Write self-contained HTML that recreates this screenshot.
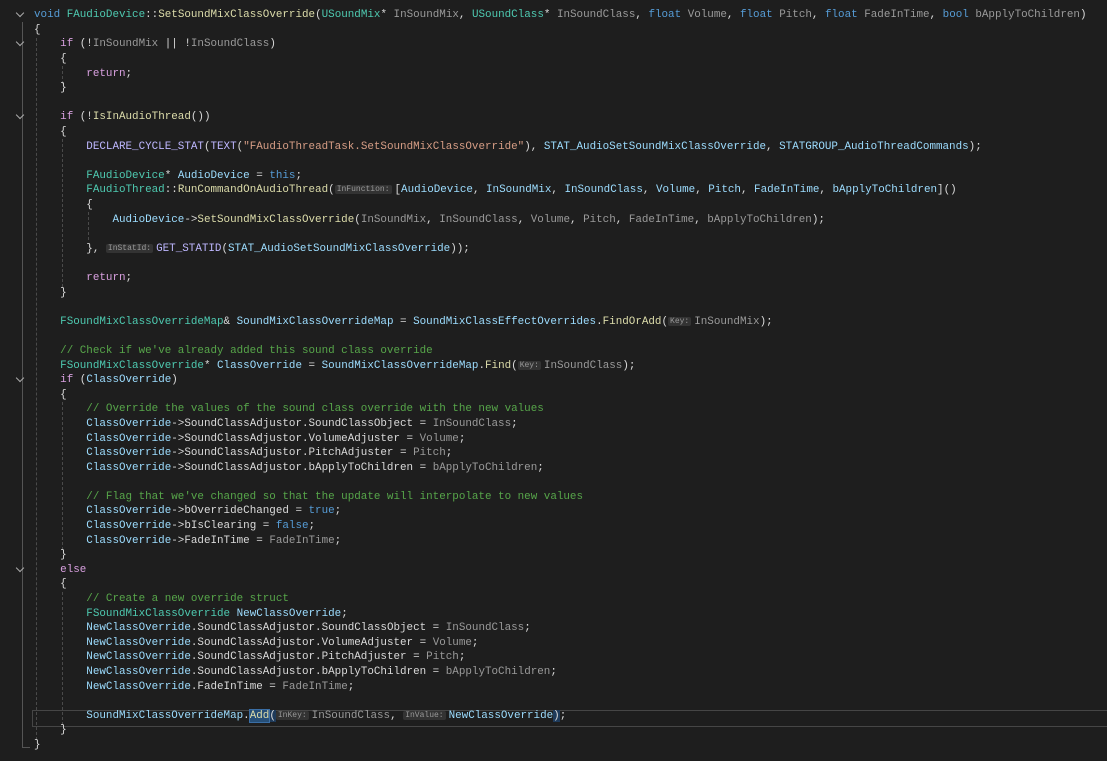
<!DOCTYPE html>
<html><head><meta charset="utf-8"><style>
html,body{margin:0;padding:0;background:#1e1e1e;width:1107px;height:761px;overflow:hidden}
#code{position:absolute;left:34px;top:8.3px;font-family:"Liberation Mono",monospace;font-size:10.9px;line-height:14.6px;white-space:pre;color:#dadada}
.k{color:#569cd6}.c{color:#d8a0df}.t{color:#4ec9b0}.f{color:#dcdcaa}.v{color:#9cdcfe}.p{color:#9a9a9a}.m{color:#beb7ff}.s{color:#d69d85}.g{color:#57a64a}
.h{font-size:8px;background:#333;color:#999;border-radius:2px;padding:0 2px;margin-right:3px;vertical-align:1px}
.fold{position:absolute;left:17px;width:5px;height:5px;border-right:1px solid #aaa;border-bottom:1px solid #aaa;transform:rotate(45deg)}
.gl{position:absolute;width:0;border-left:1px solid #555}
.gd{position:absolute;width:0;border-left:1px dashed #4a4a4a}
</style></head><body>
<div class="gl" style="left:22px;top:22px;height:725px"></div>
<div class="gl" style="left:22px;top:747px;width:8px;border-top:1px solid #555;border-left:none;height:0"></div>
<div class="gd" style="left:36px;top:38px;height:702px"></div>
<div class="gd" style="left:62px;top:66px;height:18px"></div>
<div class="gd" style="left:62px;top:139px;height:148px"></div>
<div class="gd" style="left:88px;top:212px;height:28px"></div>
<div class="gd" style="left:62px;top:402px;height:148px"></div>
<div class="gd" style="left:62px;top:592px;height:133px"></div>
<div style="position:absolute;left:32px;top:710px;width:1080px;height:15px;border:1px solid #464646"></div>
<div class="fold" style="top:10px"></div>
<div class="fold" style="top:39px"></div>
<div class="fold" style="top:112px"></div>
<div class="fold" style="top:375px"></div>
<div class="fold" style="top:565px"></div>
<div id="code"><span class="k">void</span> <span class="t">FAudioDevice</span>::<span class="f">SetSoundMixClassOverride</span>(<span class="t">USoundMix</span>* <span class="p">InSoundMix</span>, <span class="t">USoundClass</span>* <span class="p">InSoundClass</span>, <span class="k">float</span> <span class="p">Volume</span>, <span class="k">float</span> <span class="p">Pitch</span>, <span class="k">float</span> <span class="p">FadeInTime</span>, <span class="k">bool</span> <span class="p">bApplyToChildren</span>)
{
    <span class="c">if</span> (!<span class="p">InSoundMix</span> || !<span class="p">InSoundClass</span>)
    {
        <span class="c">return</span>;
    }

    <span class="c">if</span> (!<span class="f">IsInAudioThread</span>())
    {
        <span class="m">DECLARE_CYCLE_STAT</span>(<span class="m">TEXT</span>(<span class="s">"FAudioThreadTask.SetSoundMixClassOverride"</span>), <span class="v">STAT_AudioSetSoundMixClassOverride</span>, <span class="v">STATGROUP_AudioThreadCommands</span>);

        <span class="t">FAudioDevice</span>* <span class="v">AudioDevice</span> = <span class="k">this</span>;
        <span class="t">FAudioThread</span>::<span class="f">RunCommandOnAudioThread</span>(<span class="h">InFunction:</span>[<span class="v">AudioDevice</span>, <span class="v">InSoundMix</span>, <span class="v">InSoundClass</span>, <span class="v">Volume</span>, <span class="v">Pitch</span>, <span class="v">FadeInTime</span>, <span class="v">bApplyToChildren</span>]()
        {
            <span class="v">AudioDevice</span>-&gt;<span class="f">SetSoundMixClassOverride</span>(<span class="p">InSoundMix</span>, <span class="p">InSoundClass</span>, <span class="p">Volume</span>, <span class="p">Pitch</span>, <span class="p">FadeInTime</span>, <span class="p">bApplyToChildren</span>);

        }, <span class="h">InStatId:</span><span class="m">GET_STATID</span>(<span class="v">STAT_AudioSetSoundMixClassOverride</span>));

        <span class="c">return</span>;
    }

    <span class="t">FSoundMixClassOverrideMap</span>&amp; <span class="v">SoundMixClassOverrideMap</span> = <span class="v">SoundMixClassEffectOverrides</span>.<span class="f">FindOrAdd</span>(<span class="h">Key:</span><span class="p">InSoundMix</span>);

    <span class="g">// Check if we've already added this sound class override</span>
    <span class="t">FSoundMixClassOverride</span>* <span class="v">ClassOverride</span> = <span class="v">SoundMixClassOverrideMap</span>.<span class="f">Find</span>(<span class="h">Key:</span><span class="p">InSoundClass</span>);
    <span class="c">if</span> (<span class="v">ClassOverride</span>)
    {
        <span class="g">// Override the values of the sound class override with the new values</span>
        <span class="v">ClassOverride</span>-&gt;SoundClassAdjustor.SoundClassObject = <span class="p">InSoundClass</span>;
        <span class="v">ClassOverride</span>-&gt;SoundClassAdjustor.VolumeAdjuster = <span class="p">Volume</span>;
        <span class="v">ClassOverride</span>-&gt;SoundClassAdjustor.PitchAdjuster = <span class="p">Pitch</span>;
        <span class="v">ClassOverride</span>-&gt;SoundClassAdjustor.bApplyToChildren = <span class="p">bApplyToChildren</span>;

        <span class="g">// Flag that we've changed so that the update will interpolate to new values</span>
        <span class="v">ClassOverride</span>-&gt;bOverrideChanged = <span class="k">true</span>;
        <span class="v">ClassOverride</span>-&gt;bIsClearing = <span class="k">false</span>;
        <span class="v">ClassOverride</span>-&gt;FadeInTime = <span class="p">FadeInTime</span>;
    }
    <span class="c">else</span>
    {
        <span class="g">// Create a new override struct</span>
        <span class="t">FSoundMixClassOverride</span> <span class="v">NewClassOverride</span>;
        <span class="v">NewClassOverride</span>.SoundClassAdjustor.SoundClassObject = <span class="p">InSoundClass</span>;
        <span class="v">NewClassOverride</span>.SoundClassAdjustor.VolumeAdjuster = <span class="p">Volume</span>;
        <span class="v">NewClassOverride</span>.SoundClassAdjustor.PitchAdjuster = <span class="p">Pitch</span>;
        <span class="v">NewClassOverride</span>.SoundClassAdjustor.bApplyToChildren = <span class="p">bApplyToChildren</span>;
        <span class="v">NewClassOverride</span>.FadeInTime = <span class="p">FadeInTime</span>;

        <span class="v">SoundMixClassOverrideMap</span>.<span class="f" style="background:#264f78;outline:1px solid #3a6ea5">Add</span><span style="background:#1e3a5a">(</span><span class="h">InKey:</span><span class="p">InSoundClass</span>, <span class="h">InValue:</span><span class="v">NewClassOverride</span><span style="background:#1e3a5a">)</span>;
    }
}</div>
</body></html>
